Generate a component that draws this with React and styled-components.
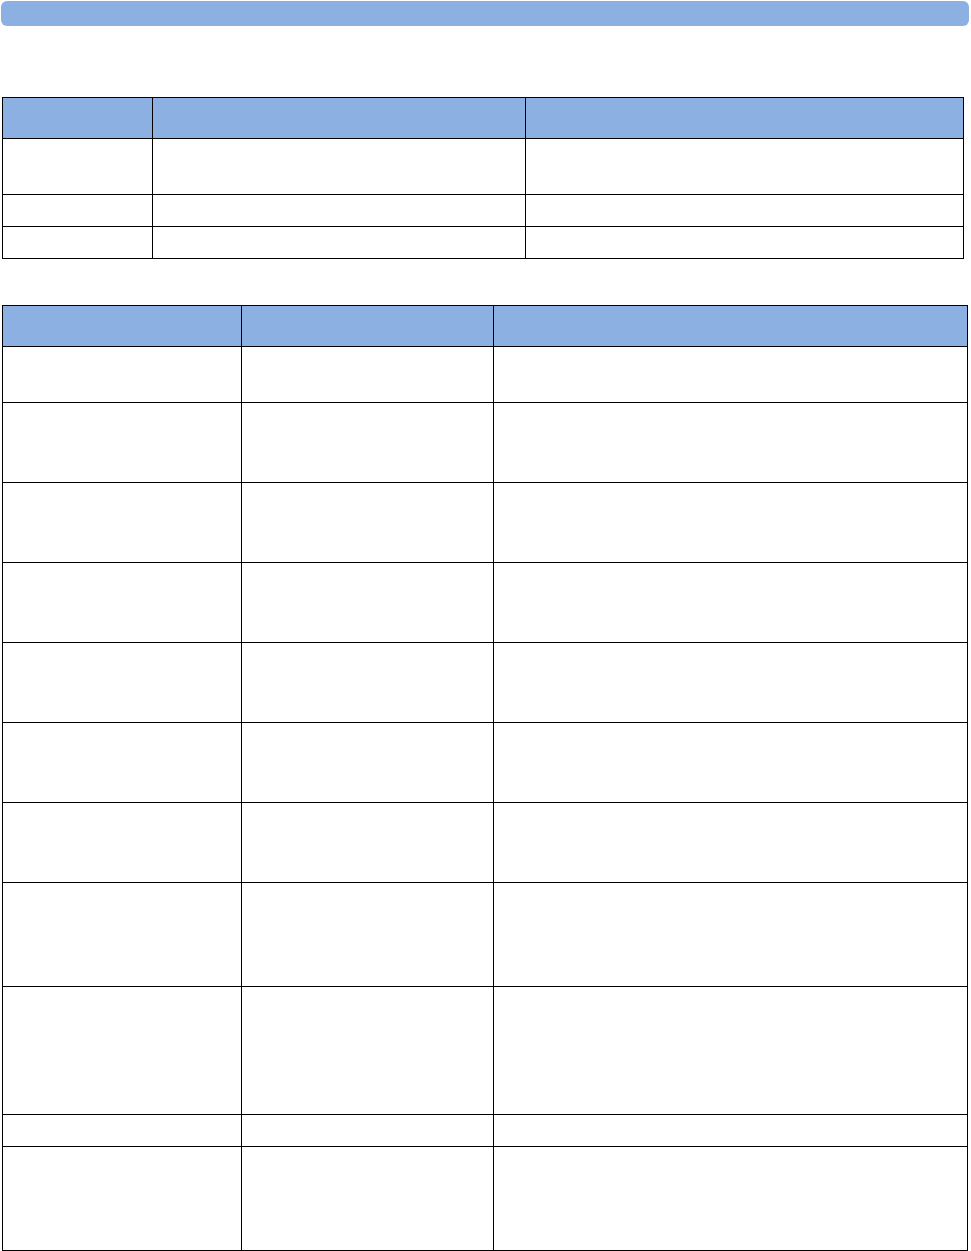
import { createGlobalStyle, styled } from "styled-components";

const GlobalStyle = createGlobalStyle`
  html, body {
    margin: 0;
    padding: 0;
    background: #ffffff;
    font-family: "Liberation Sans", Arial, sans-serif;
  }
`;

const Page = styled.div`
  width: 971px;
  padding: 1px 0 0 1px;
  box-sizing: border-box;
`;

const TopBar = styled.div`
  width: 968px;
  height: 25px;
  border-radius: 6px;
  background: #8db0e2;
`;

const Table = styled.div`
  display: grid;
  grid-template-columns: ${(p) => p.$cols};
  margin: ${(p) => p.$top}px 0 0 1px;
  width: max-content;
  border-left: 1px solid #000;
  border-top: 1px solid #000;
`;

const Cell = styled.div`
  box-sizing: border-box;
  height: ${(p) => p.$h}px;
  border-right: 1px solid #000;
  border-bottom: 1px solid #000;
  background: ${(p) => (p.$head ? "#8db0e2" : "#ffffff")};
  padding: 4px 6px;
  font-size: 14px;
  color: #000;
`;

// row heights: header, then one entry per body row
const firstTable = [41, 56, 32, 32];
const secondTable = [41, 56, 80, 80, 80, 80, 80, 80, 104, 128, 32, 104];

function Grid({ cols, rows, top }) {
  const count = cols.split(" ").length;
  return (
    <Table $cols={cols} $top={top}>
      {rows.map((h, r) =>
        Array.from({ length: count }).map((_, c) => (
          <Cell key={`${r}-${c}`} $h={h} $head={r === 0} />
        ))
      )}
    </Table>
  );
}

export default function App() {
  return (
    <>
      <GlobalStyle />
      <Page>
        <TopBar />
        <Grid cols="150px 373px 438px" rows={firstTable} top={71} />
        <Grid cols="239px 252px 474px" rows={secondTable} top={46} />
      </Page>
    </>
  );
}
